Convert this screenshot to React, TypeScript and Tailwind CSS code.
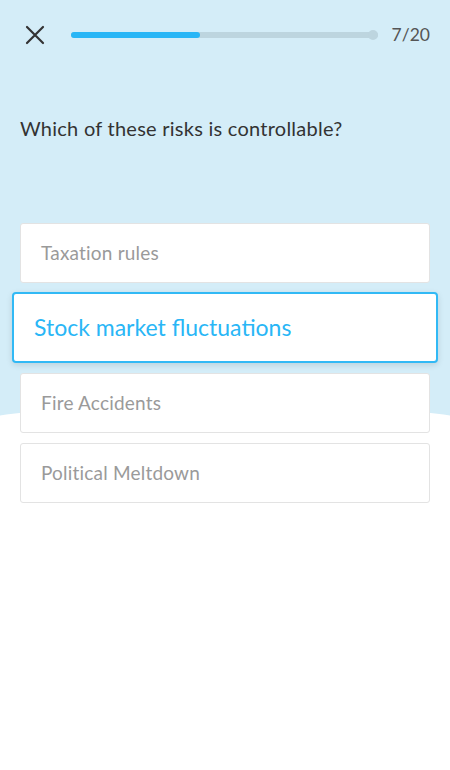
import React, { useState } from "react";

const options = [
  "Taxation rules",
  "Stock market fluctuations",
  "Fire Accidents",
  "Political Meltdown",
];

const CloseIcon = () => (
  <svg width="20" height="20" viewBox="0 0 20 20" fill="none">
    <path d="M2 2L18 18M18 2L2 18" stroke="#333333" strokeWidth="2.2" strokeLinecap="round" />
  </svg>
);

const App = () => {
  const [selected, setSelected] = useState<number>(1);
  const current = 7;
  const total = 20;

  return (
    <div
      className="relative w-[450px] h-[770px] overflow-hidden bg-white"
      style={{ fontFamily: "Lato, 'Noto Sans', sans-serif" }}
    >
      {/* background wave */}
      <div className="absolute left-0 top-0 w-full h-[440px] bg-[#d4edf8]" />
      <div className="absolute left-[-225px] top-[402px] w-[900px] h-[200px] rounded-[50%] bg-white" />
      <div className="absolute left-0 top-[500px] w-full h-[270px] bg-white" />

      <div className="relative flex flex-col">
        <div className="flex items-center h-[70px] pl-[25px] pr-[20px]">
          <button type="button" className="w-[20px] h-[20px] flex items-center justify-center">
            <CloseIcon />
          </button>
          <div className="relative flex-1 ml-[26px] mr-[14px] h-[6px] rounded-full bg-[#bdd5df]">
            <div className="h-full rounded-full bg-[#29b6f6]" style={{ width: "42%" }} />
            <div className="absolute right-0 top-1/2 -translate-y-1/2 w-[10px] h-[10px] rounded-full bg-[#bdd5df]" />
          </div>
          <span className="text-[17.5px] text-[#555555]">
            {current}/{total}
          </span>
        </div>

        <h1 className="mt-[44px] px-[20px] text-[20px] leading-[28px] tracking-[0.25px] text-[#333333]">
          Which of these risks is controllable?
        </h1>

        <div className="mt-[81px] flex flex-col gap-[10px] px-[20px]">
          {options.map((opt, i) =>
            i === selected ? (
              <button
                key={opt}
                type="button"
                onClick={() => setSelected(i)}
                className="-mx-[8px] -mt-[1px] h-[71px] flex items-center px-[20px] text-left bg-white border-2 border-[#31b9f5] rounded-[4px] shadow-[0_2px_6px_rgba(0,0,0,0.12)] text-[23px] text-[#29b6f6]"
              >
                {opt}
              </button>
            ) : (
              <button
                key={opt}
                type="button"
                onClick={() => setSelected(i)}
                className="h-[60px] flex items-center px-[20px] text-left bg-white border border-[#e3e3e3] rounded-[3px] text-[19px] tracking-[0.2px] text-[#9a9a9a]"
              >
                {opt}
              </button>
            )
          )}
        </div>
      </div>
    </div>
  );
};

export default App;
